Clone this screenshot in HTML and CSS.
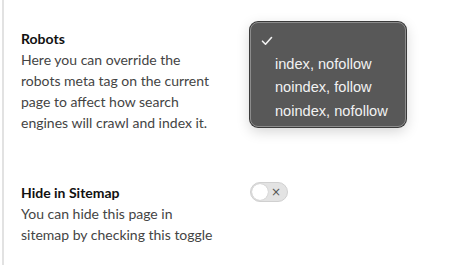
FILE: index.html
```html
<!DOCTYPE html>
<html>
<head>
<meta charset="utf-8">
<link rel="stylesheet" href="styles.css">
</head>
<body>
<div class="panel">
  <div class="row">
    <div class="info">
      <div class="title">Robots</div>
      <div class="desc">Here you can override the robots meta tag on the current page to affect how search engines will crawl and index it.</div>
    </div>
    <div class="control"></div>
  </div>
  <div class="row">
    <div class="info">
      <div class="title">Hide in Sitemap</div>
      <div class="desc">You can hide this page in sitemap by checking this toggle</div>
    </div>
    <div class="control">
      <div class="toggle"><span class="knob"></span><span class="x">×</span></div>
    </div>
  </div>
  <div class="menu">
    <div class="item"><svg class="check" width="12" height="10" viewBox="0 0 12 10"><path d="M1.5 5.2 L4.5 8.2 L10.5 1.5" fill="none" stroke="#f2f2f2" stroke-width="1.6" stroke-linecap="round" stroke-linejoin="round"/></svg></div>
    <div class="item">index, nofollow</div>
    <div class="item">noindex, follow</div>
    <div class="item">noindex, nofollow</div>
  </div>
</div>
</body>
</html>
```
FILE: styles.css
```css
html, body { margin: 0; padding: 0; background: #fff; }
body { font-family: Lato, "Noto Sans", sans-serif; }
.panel {
  position: relative;
  margin-left: 2px;
  border-left: 2px solid #e2e2e2;
  height: 265px;
  padding: 28px 0 0 17px;
  box-sizing: border-box;
}
.row { display: flex; margin-bottom: 49px; }
.info { width: 229px; }
.title { font-size: 14px; font-weight: 700; color: #111; line-height: 21px; }
.desc { font-size: 14px; color: #444; line-height: 21px; width: 200px; }
.control { padding-top: 0; }
.toggle {
  position: relative;
  width: 38px; height: 20px;
  box-sizing: border-box;
  border-radius: 10px;
  background: #e3e3e3;
  border: 1px solid #d0d0d0;
}
.knob {
  position: absolute; left: 1px; top: 1px;
  width: 16px; height: 16px; border-radius: 50%;
  background: #fff; box-shadow: 0 0 1px rgba(0,0,0,0.3);
}
.x {
  position: absolute; right: 6px; top: 0;
  font-family: "DejaVu Sans", sans-serif; font-size: 12px; line-height: 18px; color: #555;
}
.menu {
  position: absolute;
  left: 246px; top: 22px;
  width: 156px; height: 105px;
  box-sizing: border-box;
  padding-top: 6px;
  background: #585858;
  border: 1px solid #8c8c8c;
  border-radius: 8px;
  box-shadow: 0 0 0 1px #3a3a3a, 0 4px 14px rgba(0,0,0,0.18);
  font-family: "Liberation Sans", Arial, sans-serif;
  font-size: 14.6px;
  color: #f2f2f2;
}
.item { height: 23.5px; line-height: 23.5px; padding-left: 24px; }
.item:first-child { padding-left: 10px; }
.check { vertical-align: middle; }
```
